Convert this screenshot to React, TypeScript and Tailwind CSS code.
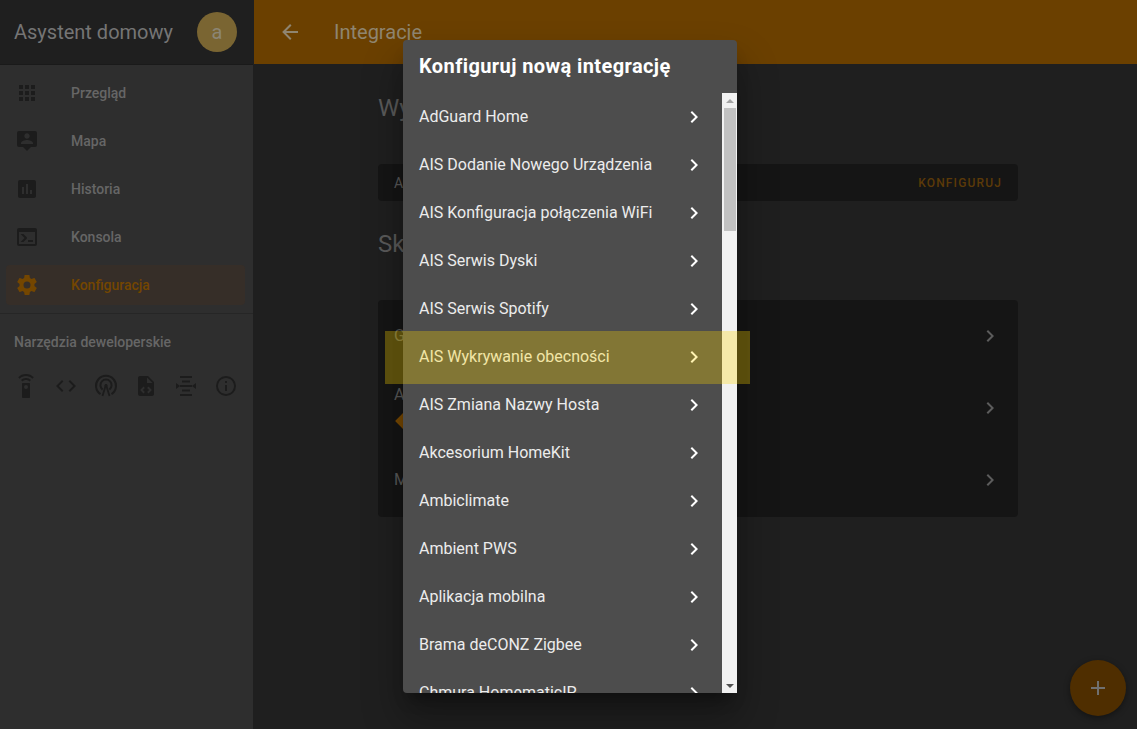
const P = {
  apps: 'M16,20H20V16H16M16,14H20V10H16M10,8H14V4H10M16,8H20V4H16M10,14H14V10H10M4,14H8V10H4M4,20H8V16H4M10,20H14V16H10M4,8H8V4H4V8Z',
  map: 'M20,2H4A2,2 0 0,0 2,4V16A2,2 0 0,0 4,18H8L12,22L16,18H20A2,2 0 0,0 22,16V4A2,2 0 0,0 20,2M12,4.3C13.5,4.3 14.7,5.5 14.7,7C14.7,8.5 13.5,9.7 12,9.7C10.5,9.7 9.3,8.5 9.3,7C9.3,5.5 10.5,4.3 12,4.3M18,15H6V14.1C6,12.1 10,11 12,11C14,11 18,12.1 18,14.1V15Z',
  poll: 'M19,3H5C3.9,3 3,3.9 3,5V19C3,20.1 3.9,21 5,21H19C20.1,21 21,20.1 21,19V5C21,3.9 20.1,3 19,3M9,17H7V10H9V17M13,17H11V7H13V17M17,17H15V13H17V17Z',
  console: 'M20,19V7H4V19H20M20,3A2,2 0 0,1 22,5V19A2,2 0 0,1 20,21H4A2,2 0 0,1 2,19V5A2,2 0 0,1 4,3H20M13,17V15H18V17H13M9.58,13L5.57,9H8.4L11.7,12.3C12.09,12.69 12.09,13.33 11.7,13.72L8.42,17H5.59L9.58,13Z',
  cog: 'M12,15.5A3.5,3.5 0 0,1 8.5,12A3.5,3.5 0 0,1 12,8.5A3.5,3.5 0 0,1 15.5,12A3.5,3.5 0 0,1 12,15.5M19.43,12.97C19.47,12.65 19.5,12.33 19.5,12C19.5,11.67 19.47,11.34 19.43,11L21.54,9.37C21.73,9.22 21.78,8.95 21.66,8.73L19.66,5.27C19.54,5.05 19.27,4.96 19.05,5.05L16.56,6.05C16.04,5.66 15.5,5.32 14.87,5.07L14.5,2.42C14.46,2.18 14.25,2 14,2H10C9.75,2 9.54,2.18 9.5,2.42L9.13,5.07C8.5,5.32 7.96,5.66 7.44,6.05L4.95,5.05C4.73,4.96 4.46,5.05 4.34,5.27L2.34,8.73C2.21,8.95 2.27,9.22 2.46,9.37L4.57,11C4.53,11.34 4.5,11.67 4.5,12C4.5,12.33 4.53,12.65 4.57,12.97L2.46,14.63C2.27,14.78 2.21,15.05 2.34,15.27L4.34,18.73C4.46,18.95 4.73,19.03 4.95,18.95L7.44,17.94C7.96,18.34 8.5,18.68 9.13,18.93L9.5,21.58C9.54,21.82 9.75,22 10,22H14C14.25,22 14.46,21.82 14.5,21.58L14.87,18.93C15.5,18.67 16.04,18.34 16.56,17.94L19.05,18.95C19.27,19.03 19.54,18.95 19.66,18.73L21.66,15.27C21.78,15.05 21.73,14.78 21.54,14.63L19.43,12.97Z',
  chevron: 'M8.59,16.58L13.17,12L8.59,7.41L10,6L16,12L10,18L8.59,16.58Z',
  back: 'M20,11V13H8L13.5,18.5L12.08,19.92L4.16,12L12.08,4.08L13.5,5.5L8,11H20Z',
  plus: 'M19,13H13V19H11V13H5V11H11V5H13V11H19V13Z',
  remote: 'M12,0C8.96,0 6.21,1.23 4.22,3.22L5.63,4.63C7.26,3 9.5,2 12,2C14.5,2 16.74,3 18.36,4.64L19.77,3.23C17.79,1.23 15.04,0 12,0M7.05,6.05L8.46,7.46C9.37,6.56 10.62,6 12,6C13.38,6 14.63,6.56 15.54,7.46L16.95,6.05C15.68,4.78 13.93,4 12,4C10.07,4 8.32,4.78 7.05,6.05M15,9H9C8.45,9 8,9.45 8,10V23C8,23.55 8.45,24 9,24H15C15.55,24 16,23.55 16,23V10C16,9.45 15.55,9 15,9M12,15A2,2 0 0,1 10,13A2,2 0 0,1 12,11A2,2 0 0,1 14,13A2,2 0 0,1 12,15Z',
  code: 'M14.6,16.6L19.2,12L14.6,7.4L16,6L22,12L16,18L14.6,16.6M9.4,16.6L4.8,12L9.4,7.4L8,6L2,12L8,18L9.4,16.6Z',
  file: 'M14,2H6C4.89,2 4,2.89 4,4V20C4,21.11 4.89,22 6,22H18C19.11,22 20,21.11 20,20V8L14,2M13,9V3.5L18.5,9H13M9.5,12.6L10.9,14L8.9,16L10.9,18L9.5,19.4L6.1,16L9.5,12.6M14.5,12.6L17.9,16L14.5,19.4L13.1,18L15.1,16L13.1,14L14.5,12.6Z',
  events: 'M6,2H18V4H6V2M8,6.5H16V8.5H8V6.5M6,11H18V13H6V11M8,15.5H16V17.5H8V15.5M6,20H18V22H6V20M2,9L6,12L2,15V9M22,9V15L18,12L22,9Z',
  info: 'M11,9H13V7H11M12,20C7.59,20 4,16.41 4,12C4,7.59 7.59,4 12,4C16.41,4 20,7.59 20,12C20,16.41 16.41,20 12,20M12,2A10,10 0 0,0 2,12A10,10 0 0,0 12,22A10,10 0 0,0 22,12A10,10 0 0,0 12,2M11,17H13V11H11V17Z',
};

const Icon = ({ d, className = '' }: { d: string; className?: string }) => (
  <svg viewBox="0 0 24 24" fill="currentColor" className={`w-6 h-6 shrink-0 ${className}`}>
    <path d={d} />
  </svg>
);

const AccessPoint = () => (
  <svg viewBox="0 0 24 24" className="w-6 h-6 shrink-0 text-[#1c1c1c]" fill="none" stroke="currentColor" strokeWidth="2">
    <path d="M6.5 20.2a10 10 0 1 1 11 0" />
    <path d="M8.6 15.6a5.6 5.6 0 1 1 6.8 0" />
    <path d="M12 10.5 8.5 22M12 10.5 15.5 22" strokeWidth="1.8" />
    <circle cx="12" cy="11.5" r="1.5" fill="currentColor" stroke="none" />
  </svg>
);

const nav = [
  { label: 'Przegląd', icon: P.apps },
  { label: 'Mapa', icon: P.map },
  { label: 'Historia', icon: P.poll },
  { label: 'Konsola', icon: P.console },
  { label: 'Konfiguracja', icon: P.cog, active: true },
];

const integrations = [
  'AdGuard Home',
  'AIS Dodanie Nowego Urządzenia',
  'AIS Konfiguracja połączenia WiFi',
  'AIS Serwis Dyski',
  'AIS Serwis Spotify',
  'AIS Wykrywanie obecności',
  'AIS Zmiana Nazwy Hosta',
  'Akcesorium HomeKit',
  'Ambiclimate',
  'Ambient PWS',
  'Aplikacja mobilna',
  'Brama deCONZ Zigbee',
  'Chmura HomematicIP',
];

const Sidebar = () => (
  <aside className="w-[254px] shrink-0 flex flex-col bg-[#2e2e2e] border-r border-[#1f1f1f]">
    <div className="h-[65px] shrink-0 flex items-center justify-between pl-[14px] pr-4 bg-[#1f1f1f] border-b border-[#1a1a1a]">
      <span className="text-xl text-[#757575]">Asystent domowy</span>
      <div className="w-10 h-10 rounded-full bg-[#7a6532] flex items-center justify-center text-xl text-[#8c8674]">a</div>
    </div>
    <nav className="flex flex-col gap-2 pt-2 pb-2 border-b border-[#262626]">
      {nav.map((item) => (
        <div
          key={item.label}
          className={`h-10 ml-[6px] mr-[8px] pl-[9px] flex items-center gap-8 rounded text-sm font-medium ${
            item.active ? 'bg-[#362e28] text-[#744600]' : 'text-[#666666]'
          }`}
        >
          <Icon d={item.icon} className={item.active ? 'text-[#744600]' : 'text-[#1c1c1c]'} />
          {item.label}
        </div>
      ))}
    </nav>
    <div className="pl-[14px] pt-[20px] text-sm font-medium leading-[16px] text-[#666666]">Narzędzia deweloperskie</div>
    <div className="flex gap-4 pl-[14px] pt-[24px] text-[#1c1c1c]">
      <Icon d={P.remote} />
      <Icon d={P.code} />
      <AccessPoint />
      <Icon d={P.file} />
      <Icon d={P.events} />
      <Icon d={P.info} />
    </div>
  </aside>
);

const Row = ({ title, extra }: { title: string; extra?: boolean }) => (
  <div className="h-[72px] flex items-center justify-between pl-4 pr-4 text-base text-[#5a5a5a]">
    <div className={extra ? 'pb-[3px]' : ''}>
      <div className="leading-5">{title}</div>
      {extra && <div className="mt-[9px] ml-1 w-[14px] h-[14px] rotate-45 bg-[#7a4a00]" />}
    </div>
    <Icon d={P.chevron} className="text-[#5c5c5c]" />
  </div>
);

const Main = () => (
  <main className="flex-1 flex flex-col min-w-0">
    <header className="h-16 shrink-0 flex items-center gap-8 pl-[24px] bg-[#6b4000] text-[#8f8570]">
      <Icon d={P.back} />
      <span className="text-xl">Integracje</span>
    </header>
    <div className="w-[640px] ml-[124px]">
      <h2 className="mt-[28px] text-2xl leading-8 text-[#5a5a5a]">Wykryte</h2>
      <div className="mt-[40px] h-[37px] flex items-center justify-between pl-4 pr-4 rounded-sm bg-[#151515] text-sm text-[#5a5a5a]">
        <span>AIS</span>
        <span className="text-xs font-medium tracking-[1.15px] text-[#5c3a08]">KONFIGURUJ</span>
      </div>
      <h2 className="mt-[27px] text-2xl leading-8 text-[#5a5a5a]">Skonfigurowane</h2>
      <div className="mt-[40px] pb-px rounded-sm bg-[#151515]">
        <Row title="Google" />
        <Row title="AIS" extra />
        <Row title="MQTT" />
      </div>
    </div>
  </main>
);

const Dialog = () => (
  <div className="absolute left-[403px] top-10 w-[334px] h-[653px] flex flex-col rounded-sm bg-[#4d4d4d] shadow-[0_11px_15px_-7px_rgba(0,0,0,0.4),0_24px_38px_3px_rgba(0,0,0,0.28)]">
    <h2 className="h-[53px] shrink-0 pl-4 pt-[13px] text-xl font-bold tracking-[0.4px] leading-[26px] text-white">Konfiguruj nową integrację</h2>
    <div className="flex-1 flex min-h-0">
      <ul className="flex-1 overflow-hidden">
        {integrations.map((name) => (
          <li key={name} className="h-12 shrink-0 flex items-center justify-between pl-4 pr-[16px] text-base text-[#ececec]">
            {name}
            <Icon d={P.chevron} className="text-white" />
          </li>
        ))}
      </ul>
      <div className="w-[15px] shrink-0 flex flex-col items-center bg-[#f1f1f1]">
        <div className="h-[15px] shrink-0 flex items-center justify-center">
          <div className="border-x-[4px] border-b-[4px] border-x-transparent border-b-[#a3a3a3]" />
        </div>
        <div className="w-[12px] h-[123px] ml-px bg-[#c1c1c1]" />
        <div className="flex-1" />
        <div className="h-[15px] shrink-0 flex items-center justify-center">
          <div className="border-x-[4px] border-t-[4px] border-x-transparent border-t-[#505050]" />
        </div>
      </div>
    </div>
  </div>
);

export default function App() {
  return (
    <div className="relative h-screen w-full flex overflow-hidden bg-[#1f1f1f] font-['Roboto',sans-serif]">
      <Sidebar />
      <Main />
      <div className="absolute right-[11px] bottom-[13px] w-14 h-14 rounded-full flex items-center justify-center bg-[#4f2e00] text-[#707070] shadow-[0_2px_6px_rgba(0,0,0,0.4)]">
        <Icon d={P.plus} />
      </div>
      <Dialog />
      <div className="absolute left-[385px] top-[331px] w-[365px] h-[53px] bg-[rgba(255,215,0,0.3)]" />
    </div>
  );
}
